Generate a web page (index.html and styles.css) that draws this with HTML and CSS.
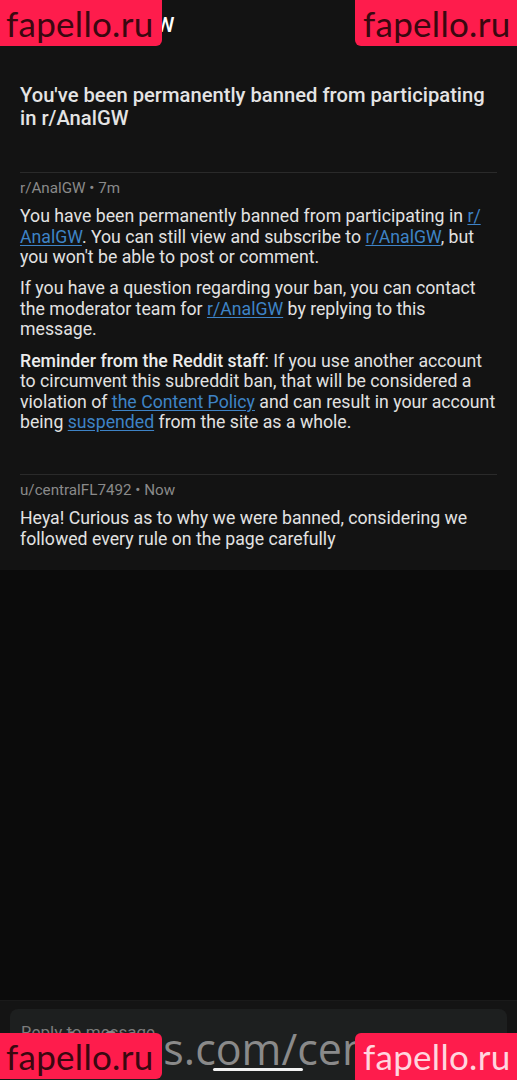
FILE: index.html
```html
<!DOCTYPE html>
<html>
<head>
<meta charset="utf-8">
<link rel="stylesheet" href="styles.css">
</head>
<body>
<div class="app">
  <div class="thread">
    <header class="topbar">
      <span class="back">&#8592;</span>
      <span class="topbar-title">r/AnalGW</span>
    </header>
    <h1 class="subject">You've been permanently banned from participating in r/AnalGW</h1>
    <div class="message">
      <div class="meta">r/AnalGW • 7m</div>
      <p>You have been permanently banned from participating in <a>r/<br>AnalGW</a>. You can still view and subscribe to <a>r/AnalGW</a>, but you won't be able to post or comment.</p>
      <p>If you have a question regarding your ban, you can contact the moderator team for <a>r/AnalGW</a> by replying to this message.</p>
      <p><strong>Reminder from the Reddit staff</strong>: If you use another account to circumvent this subreddit ban, that will be considered a violation of <a>the Content Policy</a> and can result in your account being <a>suspended</a> from the site as a whole.</p>
    </div>
    <div class="message last">
      <div class="meta">u/centralFL7492 • Now</div>
      <p>Heya! Curious as to why we were banned, considering we followed every rule on the page carefully</p>
    </div>
  </div>
  <div class="spacer"></div>
  <div class="composer">
    <div class="reply-box">Reply to message</div>
  </div>

  <div class="url-mark">onlyfans.com/centralFL7492</div>
  <div class="home-bar"></div>
  <div class="wm wm-tl">fapello.ru</div>
  <div class="wm wm-tr">fapello.ru</div>
  <div class="wm wm-bl">fapello.ru</div>
  <div class="wm wm-br">fapello.ru</div>
</div>
</body>
</html>
```
FILE: styles.css
```css
html, body {
  margin: 0;
  padding: 0;
  background: #0b0b0b;
}
body {
  font-family: Roboto, "Liberation Sans", sans-serif;
  color: #e2e2e2;
}
.app {
  position: relative;
  width: 517px;
  height: 1080px;
  overflow: hidden;
  display: flex;
  flex-direction: column;
}
.thread {
  background: #131313;
  padding-bottom: 21px;
}
.topbar {
  height: 50px;
  display: flex;
  align-items: center;
  gap: 40px;
  padding: 0 20px;
  box-sizing: border-box;
}
.back {
  font-size: 24px;
  color: #ffffff;
}
.topbar-title {
  font-size: 21px;
  font-weight: 500;
  color: #ffffff;
}
.subject {
  margin: 34px 20px 0;
  font-size: 20.2px;
  line-height: 22.5px;
  font-weight: 500;
  color: #e4e4e4;
  padding-bottom: 43px;
  border-bottom: 1px solid #2a2a2a;
}
.message {
  margin: 0 20px;
  padding-top: 6px;
}
.message + .message {
  margin-top: 41px;
  border-top: 1px solid #2a2a2a;
  padding-top: 6px;
}
.meta {
  font-size: 15.2px;
  line-height: 18px;
  color: #8a8a8a;
  margin-bottom: 9px;
}
.message p {
  margin: 0 0 10.5px;
  font-size: 17.7px;
  line-height: 20.6px;
  color: #e2e2e2;
}
.message p:last-child {
  margin-bottom: 0;
}
.message strong {
  font-weight: 500;
  color: #ececec;
}
.message a {
  color: #3e83c6;
  text-decoration: underline;
  text-underline-offset: 2px;
}
.spacer {
  flex: 1;
}
.composer {
  background: #141414;
  border-top: 1px solid #1a1a1a;
  padding: 8px 10px 0;
  height: 80px;
  box-sizing: border-box;
}
.reply-box {
  background: #1d1f1f;
  border-radius: 8px 8px 0 0;
  height: 72px;
  padding: 13px 11px;
  box-sizing: border-box;
  font-size: 17px;
  color: #7c7c7c;
}
.url-mark {
  position: absolute;
  left: 14px;
  top: 1024px;
  width: 342px;
  height: 52px;
  overflow: hidden;
  font-family: "Open Sans", "Liberation Sans", sans-serif;
  font-size: 43px;
  line-height: 50px;
  color: #8a8a8a;
  white-space: nowrap;
}
.home-bar {
  position: absolute;
  left: 213px;
  top: 1068px;
  width: 90px;
  height: 3px;
  border-radius: 2px;
  background: #f2f2f2;
}
.wm {
  position: absolute;
  background: #fe1c4c;
  color: #3a0810;
  font-family: "Lato", "Liberation Sans", sans-serif;
  font-size: 35px;
  line-height: 46px;
  height: 46px;
  width: 162px;
  box-sizing: border-box;
  padding-left: 6px;
  letter-spacing: 0.3px;
  white-space: nowrap;
}
.wm-tl {
  left: 0;
  top: 0;
  border-radius: 0 0 6px 0;
}
.wm-tr {
  right: 0;
  top: 0;
  border-radius: 0 0 0 6px;
  padding-left: 8px;
}
.wm-bl {
  left: 0;
  top: 1033px;
  border-radius: 0 6px 6px 0;
}
.wm-br {
  right: 0;
  top: 1033px;
  height: 47px;
  border-radius: 6px 0 0 0;
  color: #ffd6df;
  padding-left: 8px;
}
```
